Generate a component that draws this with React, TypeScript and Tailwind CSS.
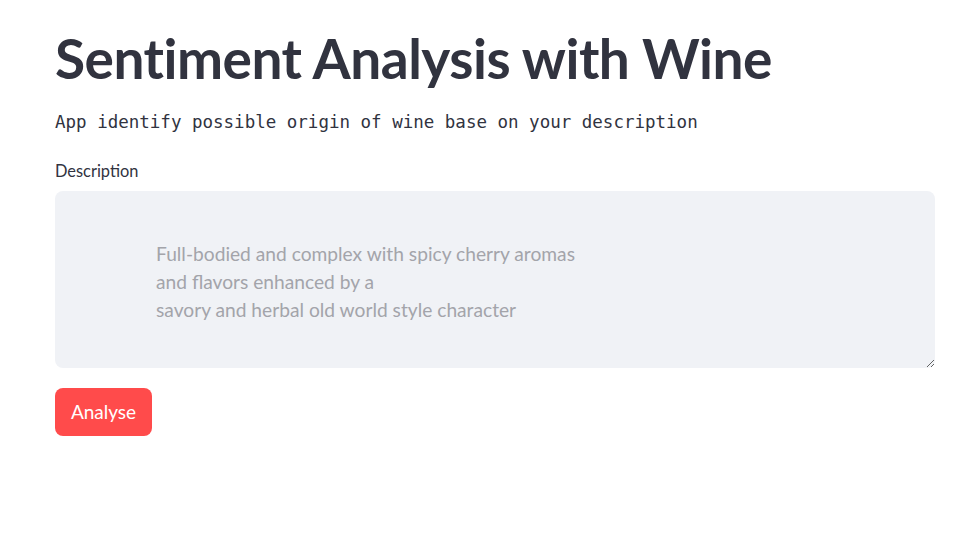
export default function App() {
  return (
    <div className="min-h-[552px] w-full bg-white text-[#31333f]" style={{ fontFamily: 'Lato, "Noto Sans", sans-serif' }}>
      <div className="flex flex-col px-[55px] pt-[23px]">
        <h1 className="text-[55px] leading-[70px] font-bold tracking-[-0.5px]">Sentiment Analysis with Wine</h1>
        <p className="mt-[15px] text-[17.5px] leading-[28px] font-['DejaVu_Sans_Mono',monospace]">
          App identify possible origin of wine base on your description
        </p>
        <label className="mt-[25px] text-[16.4px] leading-[20px]">Description</label>
        <textarea
          className="mt-[10px] h-[177px] w-[880px] rounded-[8px] bg-[#f0f2f6] pl-[101px] pt-[49px] text-[19.2px] leading-[28px] outline-none placeholder:text-[#a3a4aa]"
          placeholder={"Full-bodied and complex with spicy cherry aromas\nand flavors enhanced by a\nsavory and herbal old world style character"}
        />
        <div className="mt-[20px]">
          <button className="h-[48px] w-[97px] rounded-[8px] bg-[#ff4b4b] text-[19px] text-white">Analyse</button>
        </div>
      </div>
    </div>
  );
}
